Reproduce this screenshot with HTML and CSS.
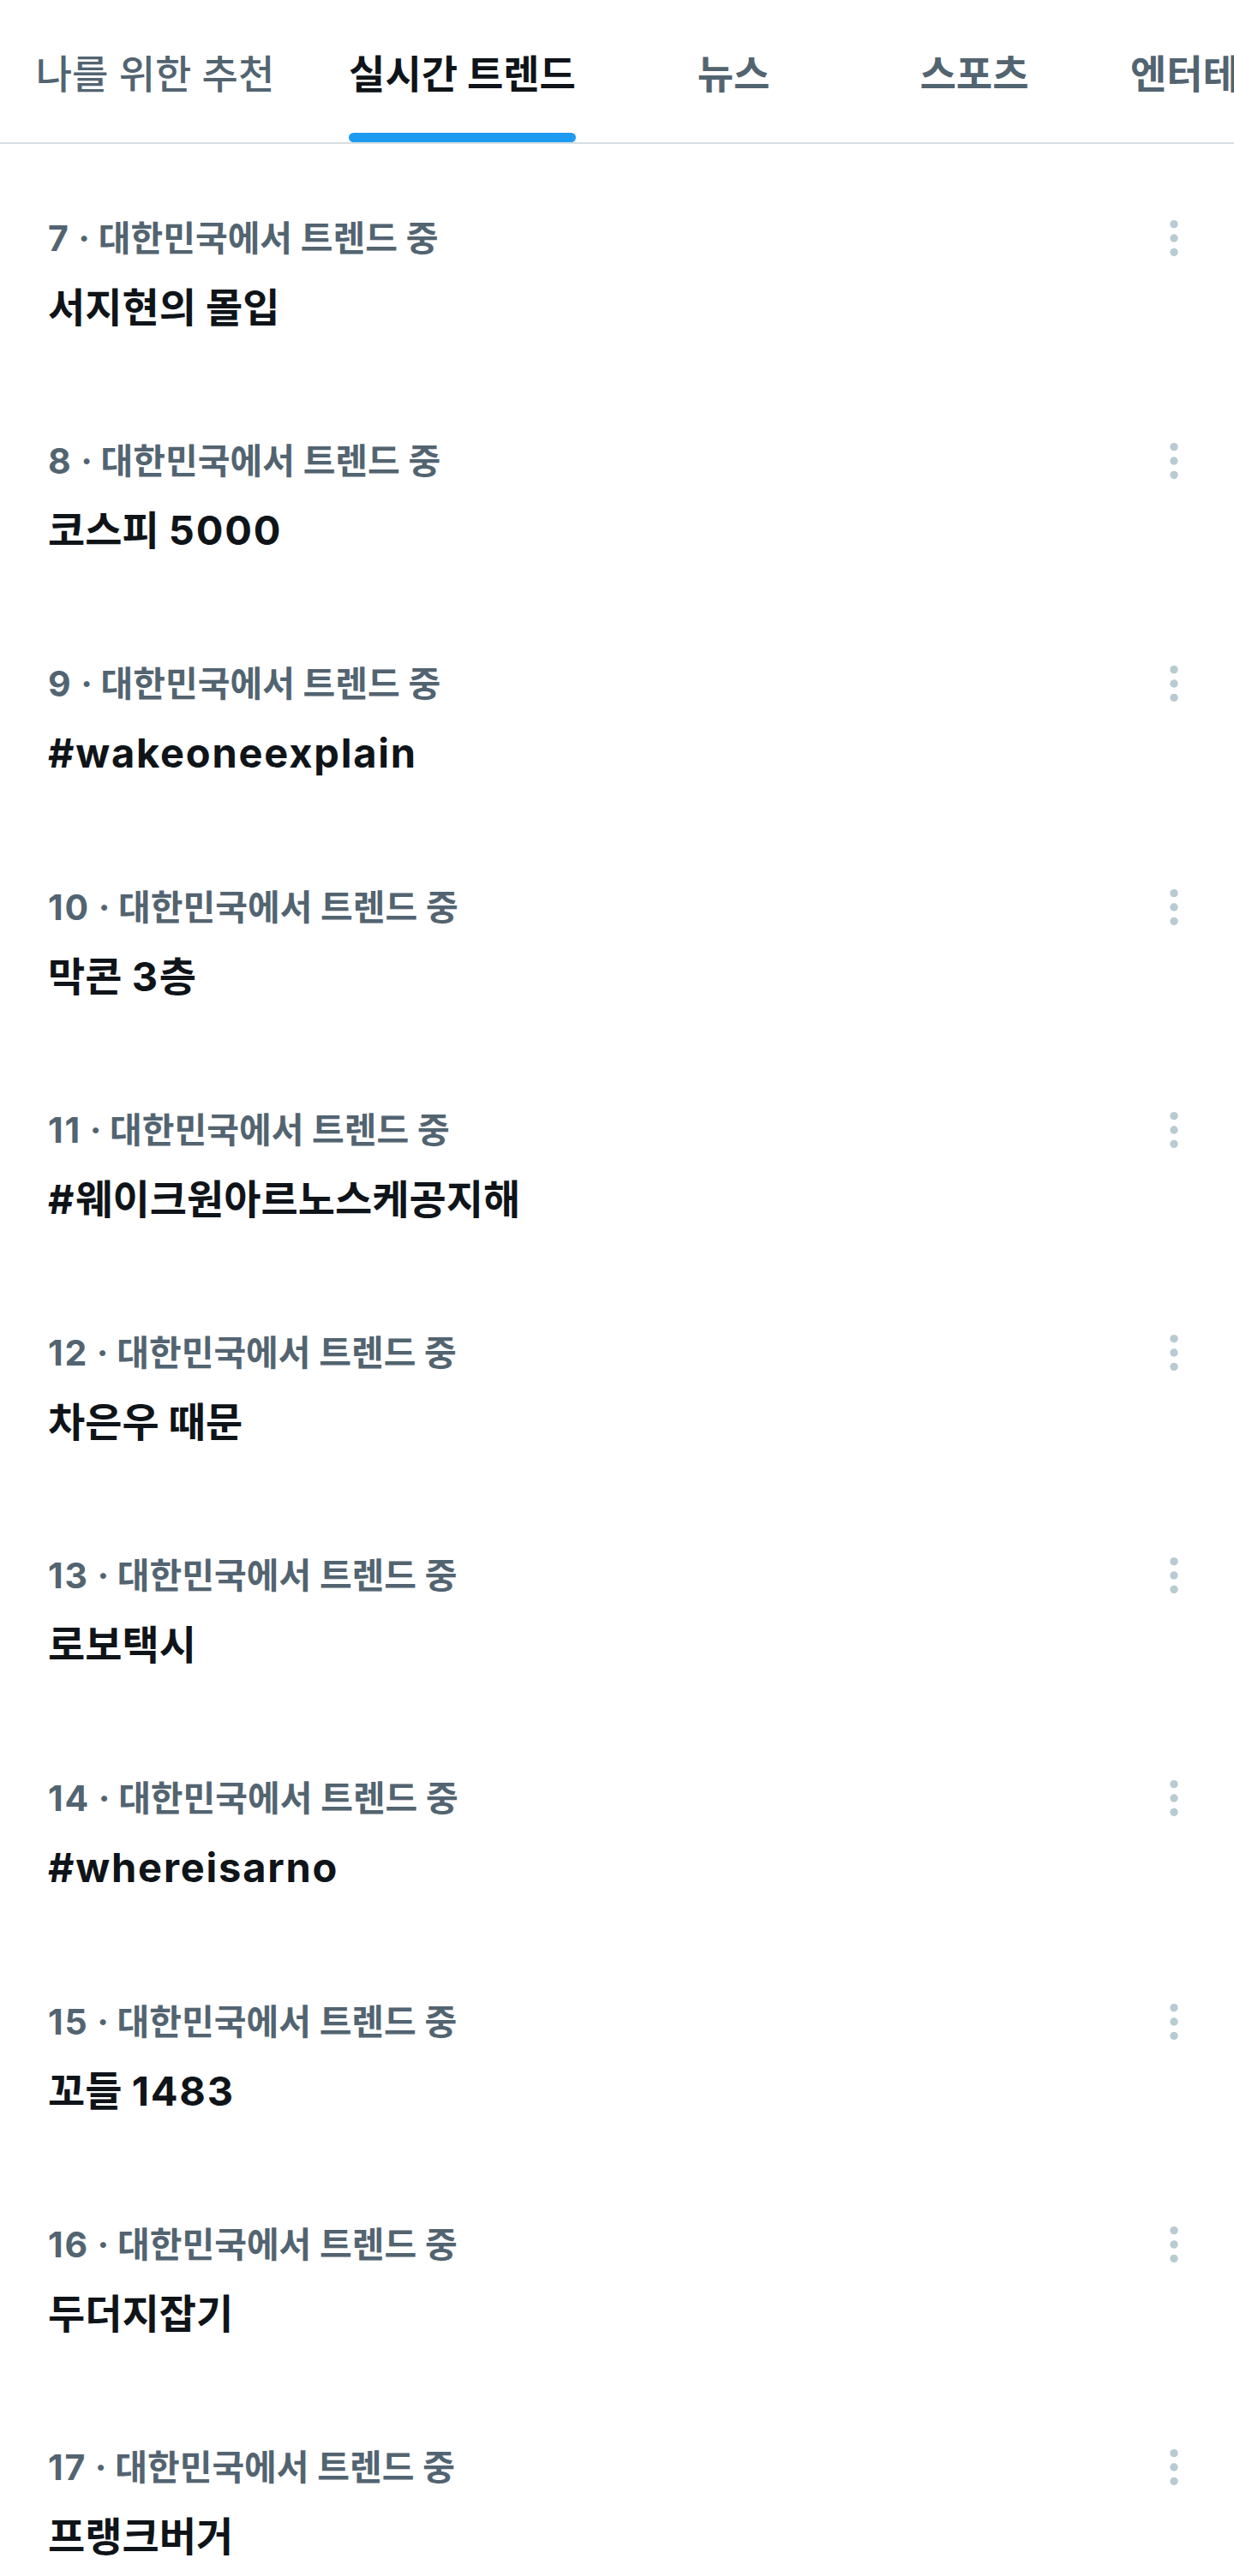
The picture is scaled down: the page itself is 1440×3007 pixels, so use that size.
FILE: index.html
```html
<!DOCTYPE html>
<html lang="ko">
<head>
<meta charset="utf-8">
<title>실시간 트렌드</title>
<link rel="stylesheet" href="styles.css">
</head>
<body>
<nav class="tabs">
  <div class="tab tab-a tab-light"><span class="tab-label">나를 위한 추천</span></div>
  <div class="tab tab-b tab-active"><span class="tab-label">실시간 트렌드<span class="indicator"></span></span></div>
  <div class="tab tab-c"><span class="tab-label">뉴스</span></div>
  <div class="tab tab-d"><span class="tab-label">스포츠</span></div>
  <div class="tab tab-e"><span class="tab-label">엔터테인먼트</span></div>
</nav>
<main class="trends">
  <div class="trend"><div class="trend-text"><div class="meta"><span class="latin">7</span> · 대한민국에서 트렌드 중</div><div class="title">서지현의 몰입</div></div><svg class="more" viewBox="0 0 24 24"><circle cx="12" cy="5" r="2"/><circle cx="12" cy="12" r="2"/><circle cx="12" cy="19" r="2"/></svg></div>
  <div class="trend"><div class="trend-text"><div class="meta"><span class="latin">8</span> · 대한민국에서 트렌드 중</div><div class="title">코스피 <span class="latin">5000</span></div></div><svg class="more" viewBox="0 0 24 24"><circle cx="12" cy="5" r="2"/><circle cx="12" cy="12" r="2"/><circle cx="12" cy="19" r="2"/></svg></div>
  <div class="trend"><div class="trend-text"><div class="meta"><span class="latin">9</span> · 대한민국에서 트렌드 중</div><div class="title"><span class="latin">#wakeoneexplain</span></div></div><svg class="more" viewBox="0 0 24 24"><circle cx="12" cy="5" r="2"/><circle cx="12" cy="12" r="2"/><circle cx="12" cy="19" r="2"/></svg></div>
  <div class="trend"><div class="trend-text"><div class="meta"><span class="latin">10</span> · 대한민국에서 트렌드 중</div><div class="title">막콘 <span class="latin">3</span>층</div></div><svg class="more" viewBox="0 0 24 24"><circle cx="12" cy="5" r="2"/><circle cx="12" cy="12" r="2"/><circle cx="12" cy="19" r="2"/></svg></div>
  <div class="trend"><div class="trend-text"><div class="meta"><span class="latin">11</span> · 대한민국에서 트렌드 중</div><div class="title"><span class="latin">#</span>웨이크원아르노스케공지해</div></div><svg class="more" viewBox="0 0 24 24"><circle cx="12" cy="5" r="2"/><circle cx="12" cy="12" r="2"/><circle cx="12" cy="19" r="2"/></svg></div>
  <div class="trend"><div class="trend-text"><div class="meta"><span class="latin">12</span> · 대한민국에서 트렌드 중</div><div class="title">차은우 때문</div></div><svg class="more" viewBox="0 0 24 24"><circle cx="12" cy="5" r="2"/><circle cx="12" cy="12" r="2"/><circle cx="12" cy="19" r="2"/></svg></div>
  <div class="trend"><div class="trend-text"><div class="meta"><span class="latin">13</span> · 대한민국에서 트렌드 중</div><div class="title">로보택시</div></div><svg class="more" viewBox="0 0 24 24"><circle cx="12" cy="5" r="2"/><circle cx="12" cy="12" r="2"/><circle cx="12" cy="19" r="2"/></svg></div>
  <div class="trend"><div class="trend-text"><div class="meta"><span class="latin">14</span> · 대한민국에서 트렌드 중</div><div class="title"><span class="latin">#whereisarno</span></div></div><svg class="more" viewBox="0 0 24 24"><circle cx="12" cy="5" r="2"/><circle cx="12" cy="12" r="2"/><circle cx="12" cy="19" r="2"/></svg></div>
  <div class="trend"><div class="trend-text"><div class="meta"><span class="latin">15</span> · 대한민국에서 트렌드 중</div><div class="title">꼬들 <span class="latin">1483</span></div></div><svg class="more" viewBox="0 0 24 24"><circle cx="12" cy="5" r="2"/><circle cx="12" cy="12" r="2"/><circle cx="12" cy="19" r="2"/></svg></div>
  <div class="trend"><div class="trend-text"><div class="meta"><span class="latin">16</span> · 대한민국에서 트렌드 중</div><div class="title">두더지잡기</div></div><svg class="more" viewBox="0 0 24 24"><circle cx="12" cy="5" r="2"/><circle cx="12" cy="12" r="2"/><circle cx="12" cy="19" r="2"/></svg></div>
  <div class="trend"><div class="trend-text"><div class="meta"><span class="latin">17</span> · 대한민국에서 트렌드 중</div><div class="title">프랭크버거</div></div><svg class="more" viewBox="0 0 24 24"><circle cx="12" cy="5" r="2"/><circle cx="12" cy="12" r="2"/><circle cx="12" cy="19" r="2"/></svg></div>
</main>
</body>
</html>
```
FILE: styles.css
```css
html, body {
  margin: 0;
  padding: 0;
  background: #ffffff;
}
body {
  width: 1440px;
  height: 3007px;
  overflow: hidden;
  font-family: "Inter", "Noto Sans CJK KR", sans-serif;
  color: #0f1419;
}
.tabs {
  display: flex;
  height: 168px;
  border-bottom: 2px solid #d6dee2;
  box-sizing: border-box;
  overflow: hidden;
  white-space: nowrap;
}
.tab {
  flex: none;
  display: flex;
  justify-content: center;
  align-items: flex-start;
  padding-top: 58px;
  box-sizing: border-box;
  height: 100%;
  font-size: 46px;
  font-weight: 700;
  color: #536471;
}
.tab-a { width: 362px; }
.tab-b { width: 355px; }
.tab-c { width: 278px; }
.tab-d { width: 284px; }
.tab-e { justify-content: flex-start; padding-left: 40px; }
.tab-light { font-weight: 500; }
.tab-active { color: #0f1419; }
.tab-label {
  position: relative;
  line-height: 57px;
}
.indicator {
  position: absolute;
  left: 0;
  right: 0;
  top: 97px;
  height: 11px;
  border-radius: 6px;
  background: #1d9bf0;
}
.trend {
  display: flex;
  align-items: flex-start;
  height: 260.2px;
  box-sizing: border-box;
  padding: 86px 42px 0 56px;
}
.trend-text {
  flex: 1;
}
.meta {
  font-size: 41px;
  line-height: 48px;
  font-weight: 700;
  color: #536471;
}
.title {
  margin-top: 28px;
  font-size: 47px;
  line-height: 57px;
  font-weight: 700;
  color: #0f1419;
}
.latin {
  letter-spacing: 1.8px;
}
.more {
  width: 56px;
  height: 56px;
  margin-top: -4px;
  fill: #b9cad3;
}
```
